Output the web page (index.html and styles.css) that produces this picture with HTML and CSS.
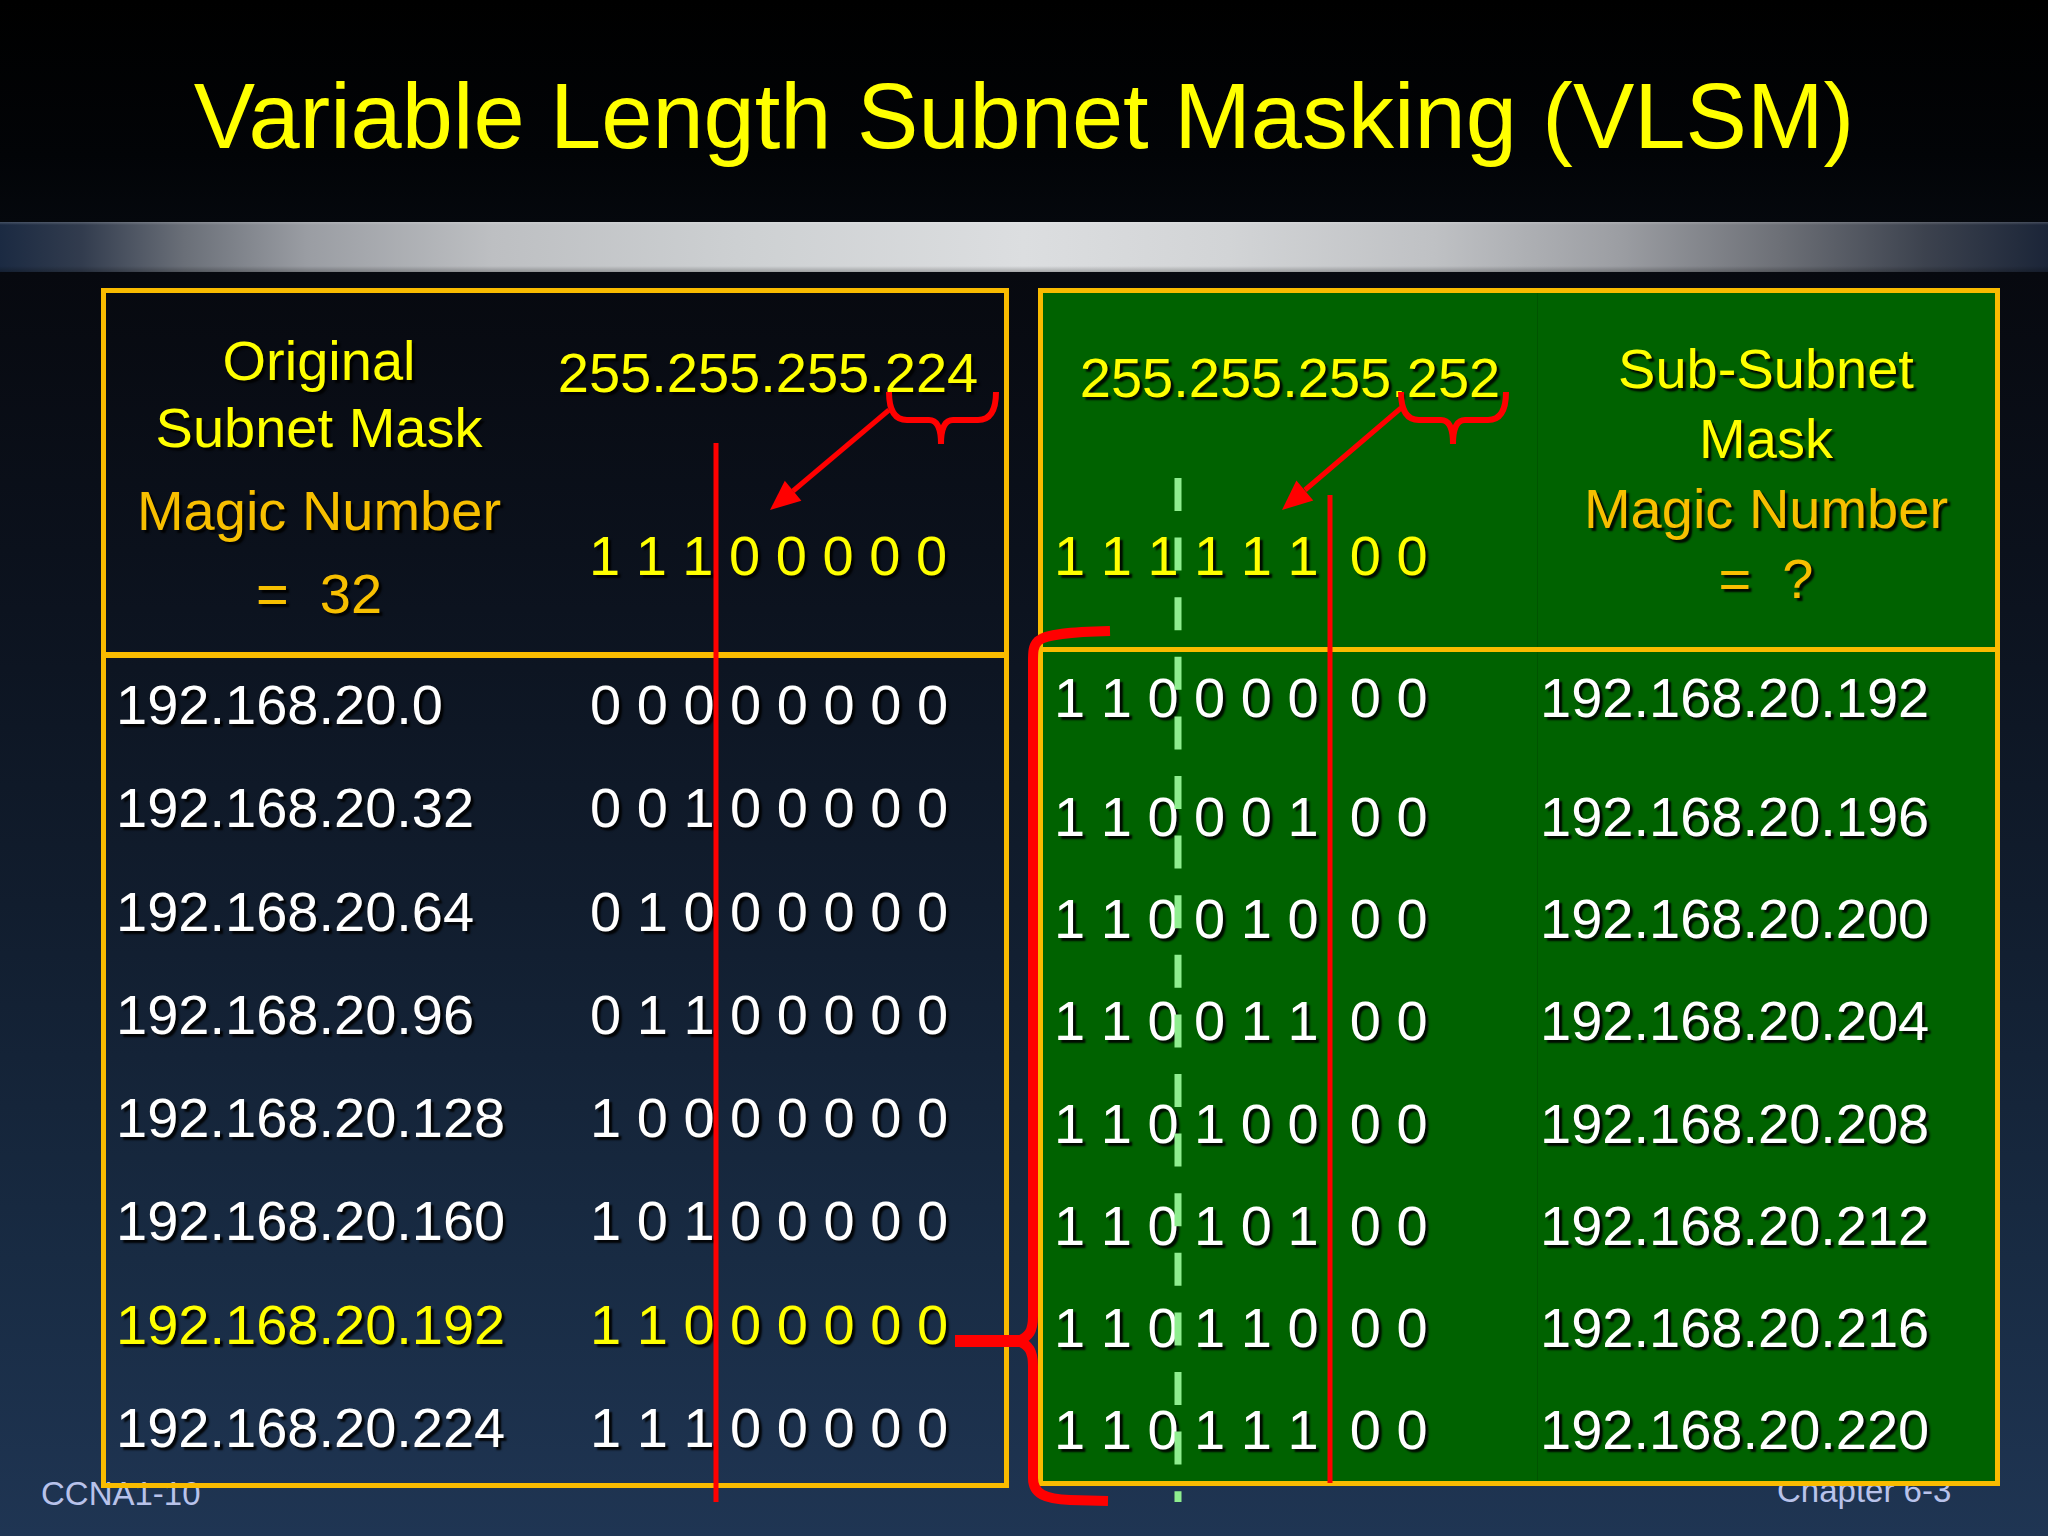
FILE: index.html
```html
<!DOCTYPE html>
<html lang="en">
<head>
<meta charset="utf-8">
<title>Variable Length Subnet Masking (VLSM)</title>
<link rel="stylesheet" href="styles.css">
</head>
<body>
<div class="slide">
  <header class="title-bar">
    <h1 class="title">Variable Length Subnet Masking (VLSM)</h1>
  </header>
  <div class="sheen"></div>

  <main class="content">
    <section class="panel panel-left">
      <div class="phead phead-left">
        <div class="label-col">
          <div class="yl">Original</div>
          <div class="yl">Subnet Mask</div>
          <div class="gold gap">Magic Number</div>
          <div class="gold gap">=&nbsp; 32</div>
        </div>
        <div class="mask-col">
          <div class="yl">255.255.255.224</div>
          <div class="yl bin bin-head">1 1 1 0 0 0 0 0</div>
        </div>
      </div>
      <div class="pbody">
        <div class="row-l"><span class="ip">192.168.20.0</span><span class="bin">0 0 0 0 0 0 0 0</span></div>
        <div class="row-l"><span class="ip">192.168.20.32</span><span class="bin">0 0 1 0 0 0 0 0</span></div>
        <div class="row-l"><span class="ip">192.168.20.64</span><span class="bin">0 1 0 0 0 0 0 0</span></div>
        <div class="row-l"><span class="ip">192.168.20.96</span><span class="bin">0 1 1 0 0 0 0 0</span></div>
        <div class="row-l"><span class="ip">192.168.20.128</span><span class="bin">1 0 0 0 0 0 0 0</span></div>
        <div class="row-l"><span class="ip">192.168.20.160</span><span class="bin">1 0 1 0 0 0 0 0</span></div>
        <div class="row-l hl"><span class="ip">192.168.20.192</span><span class="bin">1 1 0 0 0 0 0 0</span></div>
        <div class="row-l"><span class="ip">192.168.20.224</span><span class="bin">1 1 1 0 0 0 0 0</span></div>
      </div>
    </section>

    <section class="panel panel-right">
      <div class="phead phead-right">
        <div class="mask-col-r">
          <div class="yl">255.255.255.252</div>
          <div class="yl bin bin-head-r">1 1 1 1 1 1  0 0</div>
        </div>
        <div class="label-col-r">
          <div class="yl">Sub-Subnet</div>
          <div class="yl">Mask</div>
          <div class="gold">Magic Number</div>
          <div class="gold">=&nbsp; ?</div>
        </div>
      </div>
      <div class="pbody">
        <div class="row-r first"><span class="bin">1 1 0 0 0 0  0 0</span><span class="ip">192.168.20.192</span></div>
        <div class="row-r"><span class="bin">1 1 0 0 0 1  0 0</span><span class="ip">192.168.20.196</span></div>
        <div class="row-r"><span class="bin">1 1 0 0 1 0  0 0</span><span class="ip">192.168.20.200</span></div>
        <div class="row-r"><span class="bin">1 1 0 0 1 1  0 0</span><span class="ip">192.168.20.204</span></div>
        <div class="row-r"><span class="bin">1 1 0 1 0 0  0 0</span><span class="ip">192.168.20.208</span></div>
        <div class="row-r"><span class="bin">1 1 0 1 0 1  0 0</span><span class="ip">192.168.20.212</span></div>
        <div class="row-r"><span class="bin">1 1 0 1 1 0  0 0</span><span class="ip">192.168.20.216</span></div>
        <div class="row-r"><span class="bin">1 1 0 1 1 1  0 0</span><span class="ip">192.168.20.220</span></div>
      </div>
    </section>
  </main>

  <div class="foot foot-left">CCNA1-10</div>
  <div class="foot foot-right">Chapter 6-3</div>

  <svg class="marks" width="2048" height="1536" viewBox="0 0 2048 1536" aria-hidden="true">
    <g fill="none" stroke="#ff0000">
      <line x1="716" y1="443" x2="716" y2="1502" stroke-width="5"/>
      <line x1="1330" y1="495" x2="1330" y2="1483" stroke-width="5"/>
      <path d="M889,392 Q889,420 907,420 L929,420 Q941,420 941,444 Q941,420 953,420 L978,420 Q996,420 996,392" stroke-width="6"/>
      <path d="M1401,392 Q1401,420 1419,420 L1441,420 Q1453,420 1453,444 Q1453,420 1465,420 L1488,420 Q1506,420 1506,392" stroke-width="6"/>
      <line x1="889" y1="410" x2="793" y2="491" stroke-width="5"/>
      <line x1="1401" y1="408" x2="1305" y2="490" stroke-width="5"/>
      <path d="M1110,631 C1070,632 1046,634 1038,641 C1033,646 1033,652 1033,662 L1033,1316 C1033,1331 1029,1337 1018,1341 C1029,1345 1033,1351 1033,1366 L1033,1478 C1033,1494 1045,1499 1070,1500 L1108,1501" stroke-width="10"/>
      <path d="M955,1341 L1020,1341" stroke-width="12"/>
    </g>
    <polygon fill="#ff0000" points="770,510 801.4,500.8 784.8,480.8"/>
    <polygon fill="#ff0000" points="1282,510 1313.3,500.4 1296.4,480.6"/>
    <line x1="1178" y1="478" x2="1178" y2="1502" stroke="#8fee8f" stroke-width="7" stroke-dasharray="33 26.6"/>
  </svg>
</div>
</body>
</html>
```

FILE: styles.css
```css
* {
  box-sizing: border-box;
  margin: 0;
  padding: 0;
}

html, body {
  width: 2048px;
  height: 1536px;
  overflow: hidden;
}

body {
  font-family: "Liberation Sans", Arial, sans-serif;
  background: #000;
}

.slide {
  position: relative;
  width: 2048px;
  height: 1536px;
  display: flex;
  flex-direction: column;
}

/* ---------- title ---------- */
.title-bar {
  height: 222px;
  padding-top: 11px;
  background: linear-gradient(180deg, #000000 0%, #020407 70%, #05080d 100%);
  text-align: center;
}

.title {
  font-size: 92px;
  font-weight: normal;
  line-height: 211px;
  color: #ffff00;
  white-space: nowrap;
}

.sheen {
  height: 50px;
  background:
    linear-gradient(180deg, rgba(255,255,255,0.18) 0px, rgba(255,255,255,0) 3px, rgba(0,0,0,0) 44px, rgba(0,0,0,0.25) 50px),
    linear-gradient(90deg, #1b2a42 0%, #323c4e 4%, #6a6f78 9%, #9a9da3 15%, #bdbfc2 24%, #cdd0d2 36%, #dcdee0 50%, #d2d4d6 60%, #bfc1c4 70%, #9c9ea3 79%, #6c6f76 87%, #3c424e 94%, #1b2538 100%);
}

/* ---------- content ---------- */
.content {
  flex: 1;
  display: flex;
  align-items: flex-start;
  gap: 29px;
  padding: 16px 0 0 101px;
  background: linear-gradient(180deg, #07090f 0%, #0b111c 22%, #111d2e 50%, #182b43 78%, #1f3553 100%);
}

.panel {
  position: relative;
  z-index: 1;
  border: 5px solid #f9bb00;
  font-size: 56px;
  color: #ffffff;
  text-shadow: 3px 3px 2px rgba(0, 0, 0, 0.9);
}

.yl { color: #ffff00; }
.gold { color: #f7bf00; }

.bin { white-space: pre; }

/* ---------- left panel ---------- */
.panel-left {
  width: 908px;
  height: 1200px;
}

.phead-left {
  display: grid;
  grid-template-columns: 426px 472px;
  height: 365px;
  border-bottom: 6px solid #f9bb00;
}

.label-col {
  padding-top: 34px;
  text-align: center;
  line-height: 67px;
}

.label-col .gap { margin-top: 16px; }

.mask-col {
  padding-top: 46px;
  text-align: center;
  line-height: 67px;
}

.bin-head { margin-top: 116px; }

.row-l {
  display: grid;
  grid-template-columns: 484px 1fr;
  height: 103.3px;
  line-height: 94px;
}

.row-l .ip { padding-left: 10px; }

.row-l.hl { color: #ffff00; }

/* ---------- right panel ---------- */
.panel-right {
  width: 962px;
  height: 1198px;
  background: linear-gradient(90deg, #006200 0, #006200 494px, #005400 494px, #005400 495px, #006200 495px, #006200 100%);
}

.phead-right {
  display: grid;
  grid-template-columns: 494px 458px;
  height: 359px;
  border-bottom: 5px solid #f9bb00;
}

.mask-col-r {
  padding-top: 51px;
  text-align: center;
  line-height: 67px;
}

.bin-head-r {
  margin-top: 111px;
  padding-left: 11px;
  text-align: left;
}

.label-col-r {
  padding-top: 41px;
  text-align: center;
  line-height: 70px;
}

.row-r {
  display: grid;
  grid-template-columns: 494px 458px;
  height: 102.2px;
  line-height: 102.2px;
}

.row-r.first {
  height: 114px;
  line-height: 91px;
}

.row-r .bin { padding-left: 11px; }
.row-r .ip { margin-left: 3px; }

/* ---------- footer ---------- */
.foot {
  position: absolute;
  z-index: 0;
  font-size: 33px;
  line-height: 33px;
  color: #b8c2ea;
}

.foot-left {
  left: 41px;
  top: 1477px;
}

.foot-right {
  left: 1777px;
  top: 1474px;
}

/* ---------- annotations ---------- */
.marks {
  position: absolute;
  left: 0;
  top: 0;
  z-index: 5;
  pointer-events: none;
}
```
